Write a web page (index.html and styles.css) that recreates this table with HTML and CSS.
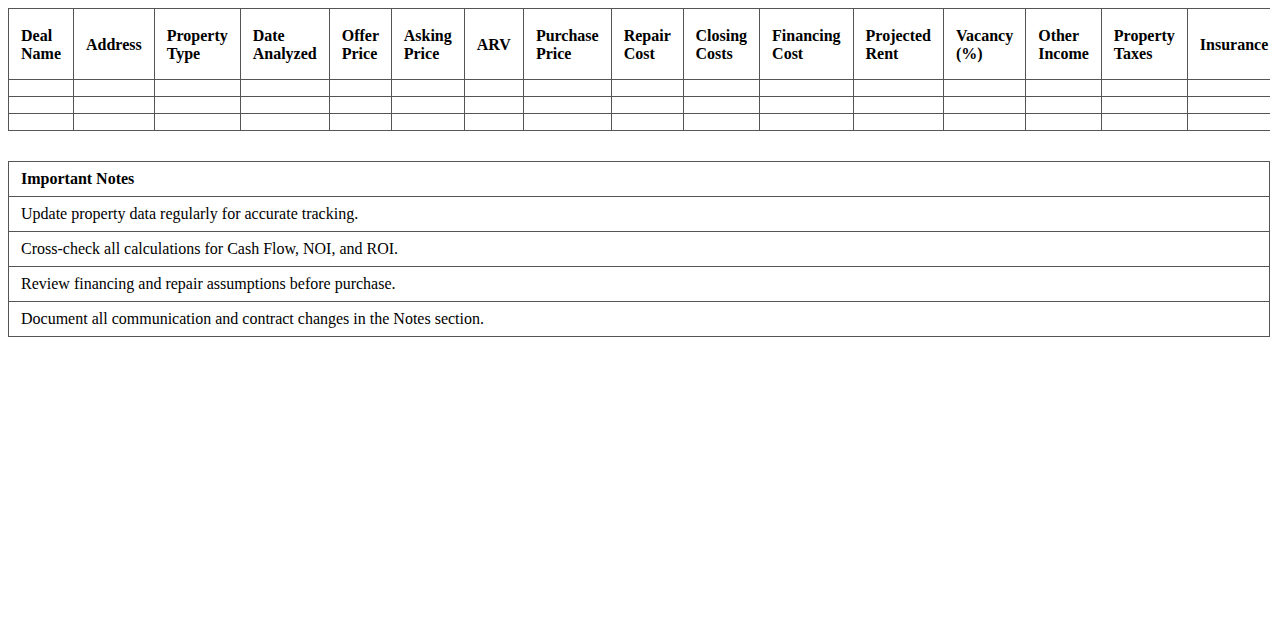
FILE: index.html
```html
<!DOCTYPE html>
<html>
<head>
<meta charset="utf-8">
<link rel="stylesheet" href="styles.css">
</head>
<body>
<table class="deals">
  <thead>
    <tr>
      <th>Deal Name</th>
      <th>Address</th>
      <th>Property Type</th>
      <th>Date Analyzed</th>
      <th>Offer Price</th>
      <th>Asking Price</th>
      <th>ARV</th>
      <th>Purchase Price</th>
      <th>Repair Cost</th>
      <th>Closing Costs</th>
      <th>Financing Cost</th>
      <th>Projected Rent</th>
      <th>Vacancy (%)</th>
      <th>Other Income</th>
      <th>Property Taxes</th>
      <th>Insurance</th>
    </tr>
  </thead>
  <tbody>
    <tr><td></td><td></td><td></td><td></td><td></td><td></td><td></td><td></td><td></td><td></td><td></td><td></td><td></td><td></td><td></td><td></td></tr>
    <tr><td></td><td></td><td></td><td></td><td></td><td></td><td></td><td></td><td></td><td></td><td></td><td></td><td></td><td></td><td></td><td></td></tr>
    <tr><td></td><td></td><td></td><td></td><td></td><td></td><td></td><td></td><td></td><td></td><td></td><td></td><td></td><td></td><td></td><td></td></tr>
  </tbody>
</table>

<table class="notes">
  <thead>
    <tr><th>Important Notes</th></tr>
  </thead>
  <tbody>
    <tr><td>Update property data regularly for accurate tracking.</td></tr>
    <tr><td>Cross-check all calculations for Cash Flow, NOI, and ROI.</td></tr>
    <tr><td>Review financing and repair assumptions before purchase.</td></tr>
    <tr><td>Document all communication and contract changes in the Notes section.</td></tr>
  </tbody>
</table>
</body>
</html>
```

FILE: styles.css
```css
html, body {
  background: #ffffff;
}

body {
  margin: 8px;
  font-family: "Liberation Serif", "Times New Roman", serif;
  font-size: 16px;
  color: #000000;
}

table {
  border-collapse: collapse;
}

th, td {
  border: 1px solid #555555;
  padding: 8px 12px;
  text-align: left;
  font-size: 16px;
}

.deals th {
  padding: 18px 12px 16px;
  font-weight: bold;
  vertical-align: middle;
}

.deals td {
  padding: 8px 12px;
}

.deals th,
.deals td {
  width: 1px;
}

.notes {
  width: 100%;
  margin-top: 30px;
}

.notes th {
  font-weight: bold;
}
```
